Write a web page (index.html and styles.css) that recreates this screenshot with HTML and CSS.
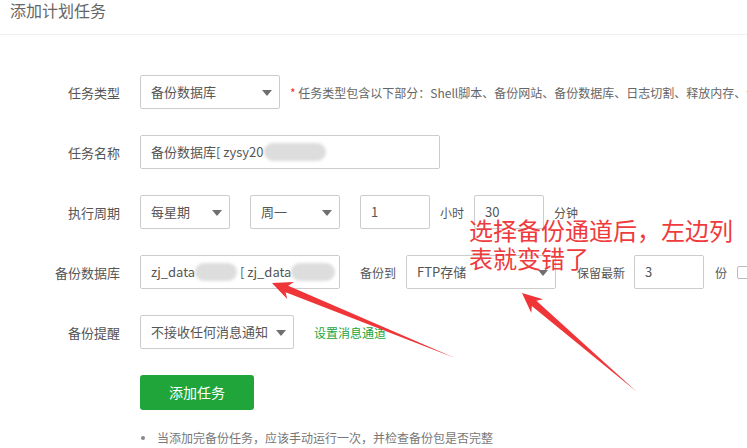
FILE: index.html
```html
<!DOCTYPE html>
<html lang="zh-CN">
<head>
	<meta charset="UTF-8">
	<title>添加计划任务</title>
	<link rel="stylesheet" href="styles.css">
</head>
<body>
<div class="page">
	<div class="title">添加计划任务</div>
	<div class="form">
		<div class="row">
			<span class="label">任务类型</span>
			<div class="box select w140">备份数据库<i class="caret"></i></div>
			<span class="hint"><em>*</em> 任务类型包含以下部分：Shell脚本、备份网站、备份数据库、日志切割、释放内存、访问URL</span>
		</div>
		<div class="row">
			<span class="label">任务名称</span>
			<div class="box w300">备份数据库[ zysy20<span class="blur b62"></span></div>
		</div>
		<div class="row">
			<span class="label">执行周期</span>
			<div class="box select w90">每星期<i class="caret"></i></div>
			<div class="box select w90 gap">周一<i class="caret"></i></div>
			<div class="box w70 gap">1</div>
			<span class="unit">小时</span>
			<div class="box w70">30</div>
			<span class="unit">分钟</span>
		</div>
		<div class="row">
			<span class="label">备份数据库</span>
			<div class="box w200 clip">zj_data<span class="blur b42"></span>&nbsp;[ zj_data<span class="blur b44"></span></div>
			<span class="unit gap2">备份到</span>
			<div class="box select w150">FTP存储<i class="caret"></i></div>
			<span class="unit gap3">保留最新</span>
			<div class="box w70">3</div>
			<span class="unit sp">份</span>
			<span class="check"></span>
		</div>
		<div class="row">
			<span class="label">备份提醒</span>
			<div class="box select w154">不接收任何消息通知<i class="caret"></i></div>
			<a href="#" class="link">设置消息通道</a>
		</div>
		<div class="row">
			<span class="label"></span>
			<a href="#" class="btn">添加任务</a>
		</div>
		<ul class="tips">
			<li>当添加完备份任务，应该手动运行一次，并检查备份包是否完整</li>
		</ul>
	</div>

	<div class="note">选择备份通道后，左边列<br>表就变错了</div>
	<svg class="arrows" width="747" height="448" viewBox="0 0 747 448">
		<polygon points="272,283 287.2,298.9 285.6,292.3 455,358 288.2,285.7 294,282.1" />
		<polygon points="522,293 531.3,312.9 531.8,306.1 637,392 536.4,300.7 543.1,299.3" />
	</svg>
</div>
</body>
</html>
```

FILE: styles.css
```css
body{margin: 0;font-family: "Noto Sans CJK SC", "Noto Sans", sans-serif;background: #fff;overflow: hidden;}
ul,li{margin: 0;padding: 0;list-style: none;}
a{text-decoration: none;}
.page{position: relative;width: 747px;height: 448px;overflow: hidden;}

.title{height: 34px;line-height: 20px;padding-left: 10px;font-size: 16px;color: #666;border-bottom: 1px solid #eee;}
.form{padding-top: 40px;}
.row{display: flex;align-items: center;height: 34px;margin-bottom: 26px;white-space: nowrap;}
.label{width: 120px;flex: none;text-align: right;padding-right: 20px;font-size: 13px;color: #555;}

.box{flex: none;box-sizing: border-box;height: 34px;line-height: 32px;border: 1px solid #ccc;border-radius: 2px;padding-left: 10px;font-size: 13px;color: #555;position: relative;display: flex;align-items: center;}
.box.clip{overflow: hidden;}
.select .caret{position: absolute;right: 7px;top: 14px;width: 0;height: 0;border-left: 5px solid transparent;border-right: 5px solid transparent;border-top: 6px solid #6f6f6f;}
.w70{width: 70px;}
.w90{width: 90px;}
.w140{width: 140px;}
.w150{width: 150px;}
.w154{width: 154px;}
.w200{width: 200px;}
.w300{width: 300px;}
.gap{margin-left: 20px;}

.unit{font-size: 12px;color: #555;margin: 0 10px;}
.unit.gap2{margin-left: 20px;}
.unit.gap3{margin-left: 21px;margin-right: 9px;}
.unit.sp{margin-left: 11px;}
.hint{font-size: 12px;color: #666;margin-left: 10px;}
.hint em{font-style: normal;color: #e33;}
.check{width: 13px;height: 13px;box-sizing: border-box;border: 1px solid #bbb;border-radius: 2px;flex: none;}

.blur{display: inline-block;height: 18px;background: #ddd;border-radius: 9px;filter: blur(1.5px);}
.b62{width: 62px;}
.b42{width: 42px;}
.b44{width: 44px;}

.link{font-size: 12px;color: #20a53a;margin-left: 20px;}
.btn{display: block;width: 114px;height: 35px;line-height: 35px;text-align: center;background: #20a53a;color: #fff;font-size: 14px;border-radius: 3px;}
.tips{padding-left: 141px;margin-top: -7px;}
.tips li{font-size: 12px;color: #777;line-height: 20px;display: flex;align-items: center;}
.tips li:before{content: "";width: 4px;height: 4px;border-radius: 50%;background: #888;margin-right: 12px;}

.note{position: absolute;left: 469px;top: 216px;font-size: 24px;line-height: 28px;color: #ef3b3d;white-space: nowrap;}
.arrows{position: absolute;left: 0;top: 0;pointer-events: none;}
.arrows polygon{fill: #ef3538;}
```
